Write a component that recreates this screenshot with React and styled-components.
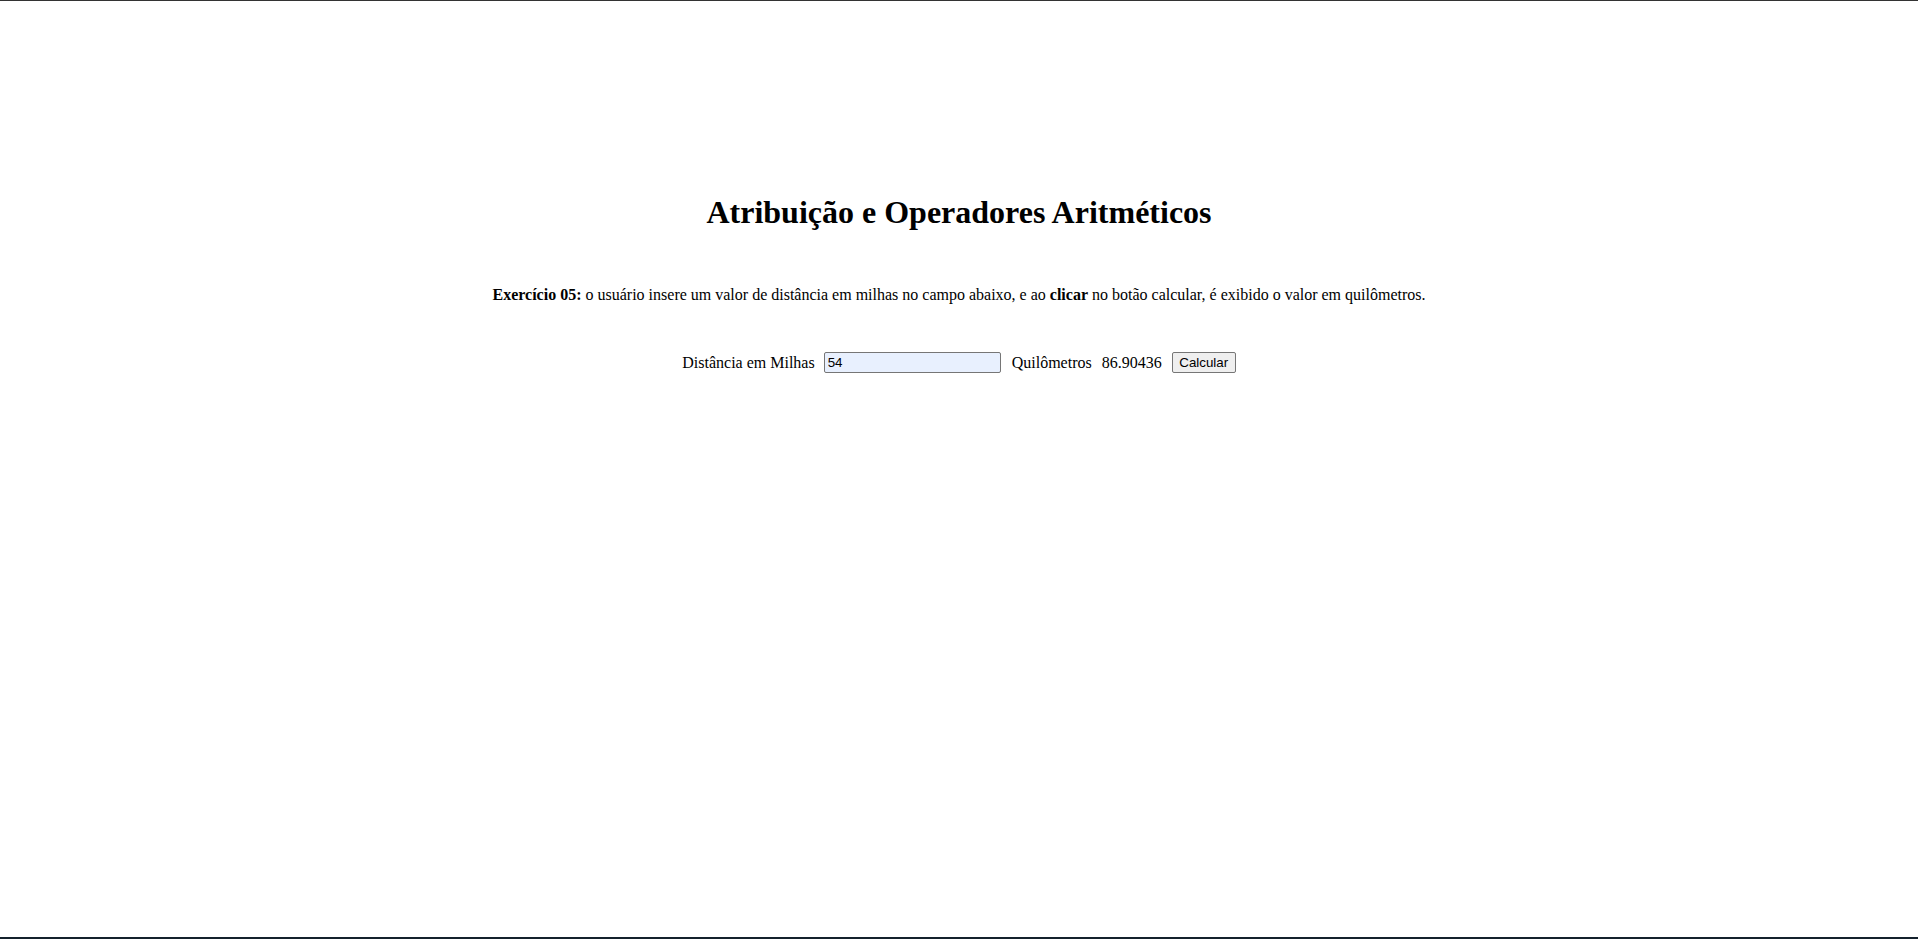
import React, { useState } from "react";
import styled, { createGlobalStyle } from "styled-components";

const GlobalStyle = createGlobalStyle`
  html, body {
    margin: 0;
    padding: 0;
    background: #ffffff;
  }
  body {
    font-family: "Liberation Serif", "Times New Roman", serif;
    color: #000000;
  }
`;

const Page = styled.div`
  box-sizing: border-box;
  min-height: 939px;
  border-top: 1px solid #333333;
  border-bottom: 2px solid #14212c;
  padding-top: 193px;
  display: flex;
  flex-direction: column;
  align-items: center;
`;

const Title = styled.h1`
  margin: 0;
  font-size: 32px;
  font-weight: bold;
  line-height: 37px;
  text-align: center;
`;

const Statement = styled.p`
  margin: 55px 0 0 0;
  font-size: 16px;
  line-height: 18px;
  text-align: center;
`;

const Form = styled.div`
  margin-top: 48px;
  display: flex;
  align-items: center;
  justify-content: center;
  gap: 9px;
  font-size: 16px;
`;

const Label = styled.label`
  margin-right: ${({ $space }) => $space || 0}px;
`;

const Field = styled.input`
  box-sizing: border-box;
  width: 177px;
  height: 21px;
  padding: 1px 3px;
  font-family: "Liberation Sans", Arial, sans-serif;
  font-size: 13.33px;
  color: #000000;
  background-color: #e8f0fe;
  border: 1px solid #767676;
  border-radius: 2px;
  outline: none;
  margin-right: 2px;
`;

const Result = styled.span``;

const Button = styled.button`
  box-sizing: border-box;
  width: 64px;
  height: 21px;
  padding: 1px 6px;
  margin-left: 1px;
  font-family: "Liberation Sans", Arial, sans-serif;
  font-size: 13.33px;
  color: #000000;
  background-color: #efefef;
  border: 1px solid #767676;
  border-radius: 2px;
  cursor: pointer;
`;

export default function App() {
  const [milhas, setMilhas] = useState("54");
  const [km, setKm] = useState("86.90436");

  const calcular = () => {
    const valor = Number.parseFloat(milhas);
    if (Number.isNaN(valor)) return;
    setKm(String(Number((valor * 1.609344).toFixed(5))));
  };

  return (
    <>
      <GlobalStyle />
      <Page>
        <Title>Atribuição e Operadores Aritméticos</Title>
        <Statement>
          <b>Exercício 05:</b> o usuário insere um valor de distância em milhas
          no campo abaixo, e ao <b>clicar</b> no botão calcular, é exibido o
          valor em quilômetros.
        </Statement>
        <Form>
          <Label htmlFor="milhas">Distância em Milhas</Label>
          <Field
            id="milhas"
            type="text"
            value={milhas}
            onChange={(e) => setMilhas(e.target.value)}
          />
          <Label $space={1}>Quilômetros</Label>
          <Result>{km}</Result>
          <Button onClick={calcular}>Calcular</Button>
        </Form>
      </Page>
    </>
  );
}
